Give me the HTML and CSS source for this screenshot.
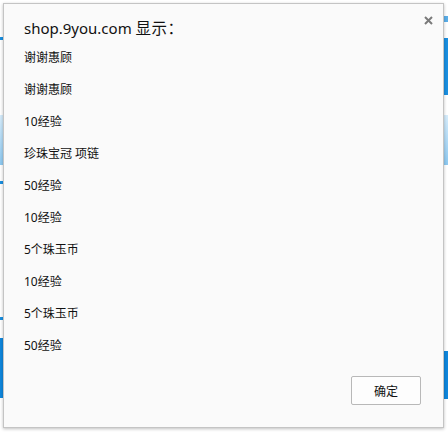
FILE: index.html
```html
<!DOCTYPE html>
<html>
<head>
<meta charset="utf-8">
<link rel="stylesheet" href="styles.css">
</head>
<body>
<div class="bg">
  <div class="strip l1"></div>
  <div class="strip l2"></div>
  <div class="strip l3"></div>
  <div class="strip l4"></div>
  <div class="strip l5"></div>
  <div class="strip r1"></div>
  <div class="strip r2"></div>
  <div class="strip r3"></div>
  <div class="strip r4"></div>
</div>
<div class="dialog">
  <div class="title">shop.9you.com <span class="cjk">显示：</span></div>
  <button class="close" aria-label="close">
    <svg width="9" height="9" viewBox="0 0 9 9"><path d="M1 1L8 8M8 1L1 8" stroke="#7a7a7a" stroke-width="2"/></svg>
  </button>
  <div class="items">
    <div class="item">谢谢惠顾</div>
    <div class="item">谢谢惠顾</div>
    <div class="item">10经验</div>
    <div class="item">珍珠宝冠 项链</div>
    <div class="item">50经验</div>
    <div class="item">10经验</div>
    <div class="item">5个珠玉币</div>
    <div class="item">10经验</div>
    <div class="item">5个珠玉币</div>
    <div class="item">50经验</div>
  </div>
  <div class="actions">
    <button class="ok">确定</button>
  </div>
</div>
</body>
</html>
```

FILE: styles.css
```css
html, body {
  margin: 0;
  padding: 0;
}
body {
  width: 448px;
  height: 432px;
  background: #ffffff;
  position: relative;
  overflow: hidden;
  font-family: "Noto Sans", "Noto Sans CJK SC", sans-serif;
}
.bg {
  position: absolute;
  inset: 0;
}
.strip {
  position: absolute;
  width: 4px;
  background: #1a8fe0;
}
.l1 { left: 0; top: 37px; height: 3px; }
.l2 { left: 0; top: 115px; height: 50px; background: linear-gradient(#d6ecfb, #8cc8f0); }
.l3 { left: 0; top: 181px; height: 3px; }
.l4 { left: 0; top: 317px; height: 3px; }
.l5 { left: 0; top: 338px; height: 60px; background: #0f86dc; }
.r1 { right: 0; top: 16px; height: 6px; background: #5aaee8; }
.r2 { right: 0; top: 38px; height: 57px; background: #1a8fe0; }
.r3 { right: 0; top: 115px; height: 50px; background: linear-gradient(#d6ecfb, #8cc8f0); }
.r4 { right: 0; top: 351px; height: 48px; background: #0f86dc; }

.dialog {
  position: relative;
  margin: 3px 0 0 3px;
  width: 439px;
  height: 423px;
  box-sizing: content-box;
  background: #fafafa;
  border: 1px solid #c4c4c4;
  box-shadow: 0 1px 3px rgba(0,0,0,0.25);
  padding: 0;
  display: flex;
  flex-direction: column;
}
.title {
  margin: 14px 0 0 20px;
  font-size: 15px;
  line-height: 20px;
  color: #111;
}
.cjk {
  font-size: 15.5px;
  letter-spacing: 0.5px;
}
.close {
  position: absolute;
  top: 12px;
  right: 10px;
  width: 9px;
  height: 9px;
  padding: 0;
  border: 0;
  background: transparent;
  display: flex;
}
.items {
  margin: 4px 0 0 20px;
  display: flex;
  flex-direction: column;
}
.item {
  font-size: 12px;
  line-height: 32px;
  color: #111;
}
.actions {
  display: flex;
  justify-content: flex-end;
  margin: 14px 22px 0 0;
}
.ok {
  width: 70px;
  height: 29px;
  border: 1px solid #b8b8b8;
  border-radius: 2px;
  background: #fdfdfd;
  font-family: "Noto Sans CJK SC", sans-serif;
  font-size: 12px;
  color: #111;
  padding: 0;
}
```
